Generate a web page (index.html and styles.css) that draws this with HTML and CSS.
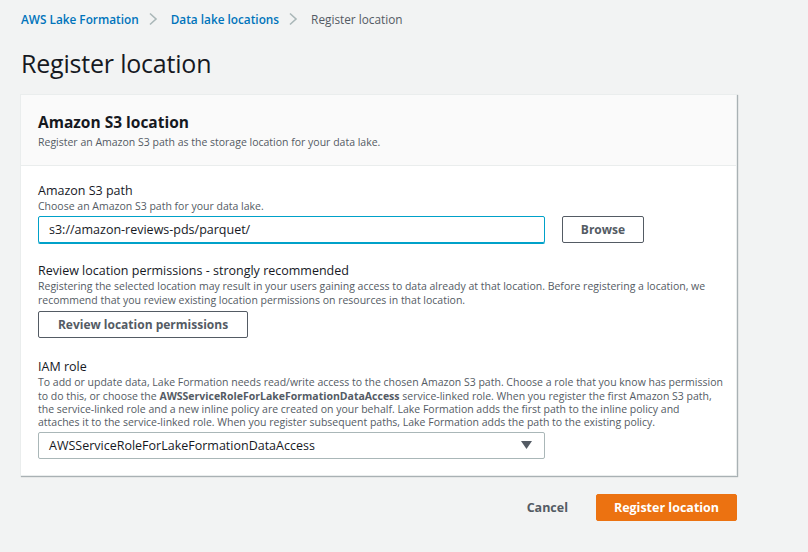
FILE: index.html
```html
<!DOCTYPE html>
<html>
<head>
<meta charset="utf-8">
<link rel="stylesheet" href="styles.css">
</head>
<body>
<div class="page">
  <nav class="crumbs">
    <a class="crumb-link">AWS Lake Formation</a>
    <svg class="chev" width="10" height="14" viewBox="0 0 10 14"><path d="M2 1.5 L8 7 L2 12.5" fill="none" stroke="#aab7b8" stroke-width="1.6"/></svg>
    <a class="crumb-link">Data lake locations</a>
    <svg class="chev" width="10" height="14" viewBox="0 0 10 14"><path d="M2 1.5 L8 7 L2 12.5" fill="none" stroke="#aab7b8" stroke-width="1.6"/></svg>
    <span class="crumb-current">Register location</span>
  </nav>
  <h1 class="title">Register location</h1>

  <section class="card">
    <header class="card-head">
      <h2 class="card-title">Amazon S3 location</h2>
      <p class="card-sub">Register an Amazon S3 path as the storage location for your data lake.</p>
    </header>
    <div class="card-body">
      <div class="field f-path">
        <div class="label">Amazon S3 path</div>
        <div class="desc">Choose an Amazon S3 path for your data lake.</div>
        <div class="row">
          <div class="input focus">s3://amazon-reviews-pds/parquet/</div>
          <button class="btn btn-browse">Browse</button>
        </div>
      </div>
      <div class="field f-review">
        <div class="label">Review location permissions - strongly recommended</div>
        <div class="desc">Registering the selected location may result in your users gaining access to data already at that location. Before registering a location, we<br>recommend that you review existing location permissions on resources in that location.</div>
        <button class="btn btn-review">Review location permissions</button>
      </div>
      <div class="field f-iam">
        <div class="label">IAM role</div>
        <div class="desc">To add or update data, Lake Formation needs read/write access to the chosen Amazon S3 path. Choose a role that you know has permission<br>to do this, or choose the <b>AWSServiceRoleForLakeFormationDataAccess</b> service-linked role. When you register the first Amazon S3 path,<br>the service-linked role and a new inline policy are created on your behalf. Lake Formation adds the first path to the inline policy and<br>attaches it to the service-linked role. When you register subsequent paths, Lake Formation adds the path to the existing policy.</div>
        <div class="input select">
          <span>AWSServiceRoleForLakeFormationDataAccess</span>
          <svg width="11" height="8" viewBox="0 0 11 8"><path d="M0 0 H11 L5.5 8 Z" fill="#545b64"/></svg>
        </div>
      </div>
    </div>
  </section>

  <div class="actions">
    <button class="btn-link">Cancel</button>
    <button class="btn-primary">Register location</button>
  </div>
</div>
</body>
</html>
```

FILE: styles.css
```css
* { box-sizing: border-box; }
html, body { margin: 0; padding: 0; }
body {
  background: #f2f3f3;
  font-family: "Open Sans", "Noto Sans", sans-serif;
  color: #16191f;
  width: 808px;
  height: 552px;
  overflow: hidden;
}
.page {
  padding: 10px 71px 0 20px;
  display: flex;
  flex-direction: column;
}
.crumbs {
  display: flex;
  align-items: center;
  height: 18px;
  font-size: 11.8px;
  padding-left: 1px;
}
.crumb-link { color: #0073bb; font-weight: 600; }
.chev { margin: 0 13px 0 9px; }
.crumb-current { color: #545b64; }
.title {
  margin: 20px 0 0 1px;
  font-size: 25px;
  font-weight: 400;
  line-height: 30px;
  color: #16191f;
  letter-spacing: -0.2px;
}
.card {
  margin-top: 16px;
  background: #fff;
  border: 1px solid #eaeded;
  box-shadow: 1px 1px 1px 0 rgba(0,28,36,0.3);
  display: flex;
  flex-direction: column;
}
.card-head {
  background: #fafafa;
  border-bottom: 1px solid #eaeded;
  padding: 17px 17px 0;
  height: 71px;
}
.card-title {
  margin: 0;
  font-size: 15.5px;
  font-weight: 700;
  line-height: 20px;
}
.card-sub {
  margin: 3px 0 0;
  font-size: 10.5px;
  line-height: 14px;
  color: #545b64;
}
.card-body {
  padding: 16px 17px 16px;
  display: flex;
  flex-direction: column;
}
.label {
  font-size: 12.5px;
  line-height: 18px;
}
.desc {
  font-size: 10.5px;
  line-height: 13.4px;
  color: #545b64;
  white-space: nowrap;
}
.desc b { font-weight: 700; }
.row {
  display: flex;
  align-items: center;
  gap: 17px;
  margin-top: 3px;
}
.input {
  width: 507px;
  height: 27px;
  border: 1px solid #aab7b8;
  border-radius: 2px;
  font-size: 12.5px;
  padding: 0 10px;
  display: flex;
  align-items: center;
  color: #16191f;
}
.input.focus { border-color: #00a1c9; box-shadow: 0 1px 0 0 #00a1c9; }
.btn {
  background: #fff;
  border: 1px solid #545b64;
  border-radius: 2px;
  color: #545b64;
  font-family: inherit;
  font-weight: 700;
  font-size: 12px;
  height: 27px;
  padding: 0 18px;
  flex: none;
}
.btn-browse { width: 82px; padding: 0; }
.f-review { margin-top: 19px; }
.btn-review { display: block; margin-top: 4px; width: 210px; padding: 0; }
.f-iam { margin-top: 20px; }
.select { justify-content: space-between; margin-top: 2px; padding-right: 12px; }
.actions {
  display: flex;
  justify-content: flex-end;
  align-items: center;
  margin-top: 18px;
  gap: 28px;
}
.btn-link {
  background: none;
  border: 0;
  font-family: inherit;
  font-weight: 700;
  font-size: 12.5px;
  color: #545b64;
  padding: 0;
}
.btn-primary {
  background: #ec7211;
  border: 1px solid #ec7211;
  border-radius: 2px;
  color: #fff;
  font-family: inherit;
  font-weight: 700;
  font-size: 12.5px;
  height: 27px;
  width: 141px;
  padding: 0;
}
```
